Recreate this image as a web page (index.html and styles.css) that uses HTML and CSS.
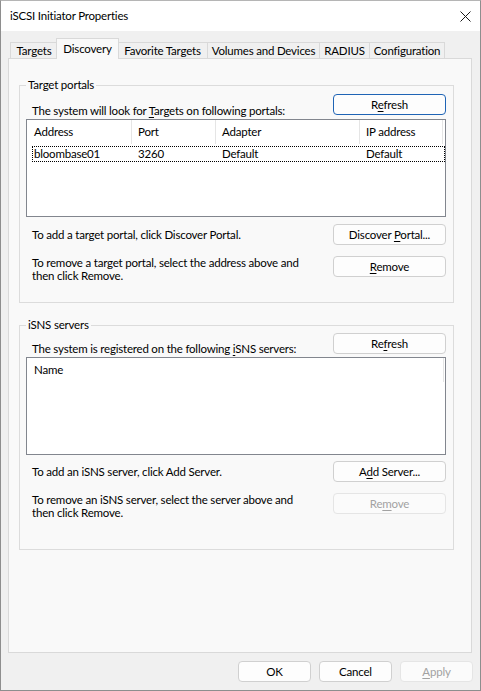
FILE: index.html
```html
<!DOCTYPE html>
<html lang="en">
<head>
<meta charset="utf-8">
<title>iSCSI Initiator Properties</title>
<link rel="stylesheet" href="styles.css">
</head>
<body>
<div class="window">
  <header class="titlebar">
    <span class="title">iSCSI Initiator Properties</span>
    <svg class="close" width="11" height="11" viewBox="0 0 11 11" aria-label="Close">
      <path d="M0.5 0.5 L10.5 10.5 M10.5 0.5 L0.5 10.5" stroke="#1a1a1a" stroke-width="1" fill="none"/>
    </svg>
  </header>

  <div class="client">
    <nav class="tabstrip">
      <span class="tab tab-targets">Targets</span>
      <span class="tab tab-discovery is-active">Discovery</span>
      <span class="tab tab-favorites">Favorite Targets</span>
      <span class="tab tab-volumes">Volumes and Devices</span>
      <span class="tab tab-radius">RADIUS</span>
      <span class="tab tab-config">Configuration</span>
    </nav>

    <section class="panel">
      <fieldset class="group group-portals">
        <legend>Target portals</legend>
        <div class="head-row">
          <span class="label">The system will look for <u>T</u>argets on following portals:</span>
          <button class="btn btn-default">R<u>e</u>fresh</button>
        </div>
        <div class="listview">
          <div class="lv-header lv-portals">
            <span class="lv-col">Address</span>
            <span class="lv-col">Port</span>
            <span class="lv-col">Adapter</span>
            <span class="lv-col">IP address</span>
          </div>
          <div class="lv-row lv-portals-row">
            <span class="lv-cell">bloombase01</span>
            <span class="lv-cell">3260</span>
            <span class="lv-cell">Default</span>
            <span class="lv-cell">Default</span>
          </div>
        </div>
        <div class="action-row">
          <span class="label">To add a target portal, click Discover Portal.</span>
          <button class="btn">Discover <u>P</u>ortal...</button>
        </div>
        <div class="action-row action-row-wrap">
          <span class="label label-wrap">To remove a target portal, select the address above and<br>then click Remove.</span>
          <button class="btn"><u>R</u>emove</button>
        </div>
      </fieldset>

      <fieldset class="group group-isns">
        <legend>iSNS servers</legend>
        <div class="head-row">
          <span class="label">The system is registered on the following <u>i</u>SNS servers:</span>
          <button class="btn">Re<u>f</u>resh</button>
        </div>
        <div class="listview">
          <div class="lv-header lv-servers">
            <span class="lv-col">Name</span>
          </div>
        </div>
        <div class="action-row">
          <span class="label">To add an iSNS server, click Add Server.</span>
          <button class="btn">A<u>d</u>d Server...</button>
        </div>
        <div class="action-row action-row-wrap">
          <span class="label label-wrap">To remove an iSNS server, select the server above and<br>then click Remove.</span>
          <button class="btn" disabled>Re<u>m</u>ove</button>
        </div>
      </fieldset>
    </section>

    <footer class="footer">
      <button class="btn btn-dialog">OK</button>
      <button class="btn btn-dialog">Cancel</button>
      <button class="btn btn-dialog" disabled><u>A</u>pply</button>
    </footer>
  </div>
</div>
</body>
</html>
```

FILE: styles.css
```css
* {
  box-sizing: border-box;
}

html, body {
  margin: 0;
  padding: 0;
  background: #f0f0f0;
}

body {
  font-family: "Lato", "Liberation Sans", sans-serif;
  font-size: 11.5px;
  letter-spacing: -0.2px;
  color: #000;
}

.window {
  width: 481px;
  height: 691px;
  border: 1px solid #8e8e8e;
  border-top-color: #b5b5b5;
  background: #f0f0f0;
  display: flex;
  flex-direction: column;
}

/* title bar */
.titlebar {
  height: 30px;
  flex: none;
  background: #fff;
  display: flex;
  align-items: center;
  justify-content: space-between;
  padding: 0 9px 0 9px;
}

.title {
  line-height: 16px;
}

.close {
  display: block;
}

/* client area */
.client {
  flex: 1;
  display: flex;
  flex-direction: column;
  padding: 0 7px 0 7px;
}

.tabstrip {
  height: 27px;
  display: flex;
  align-items: flex-end;
  padding-left: 2px;
}

.tab {
  height: 16px;
  border: 1px solid #d9d9d9;
  border-bottom: 0;
  background: #f0f0f0;
  display: flex;
  align-items: center;
  justify-content: center;
  line-height: 14px;
  white-space: nowrap;
  flex: none;
}

.tab + .tab {
  margin-left: -1px;
}

.tab.is-active {
  height: 21px;
  margin-bottom: -1px;
  margin-left: -2px;
  margin-right: -1px;
  background: #f9f9f9;
  position: relative;
  z-index: 1;
  padding-bottom: 1px;
}

.tab-targets { width: 48px; }
.tab-discovery { width: 63px; }
.tab-favorites { width: 91px; }
.tab-volumes { width: 113px; }
.tab-radius { width: 51px; }
.tab-config { width: 76px; }

.panel {
  height: 595px;
  flex: none;
  width: 464px;
  border: 1px solid #d9d9d9;
  background: #f9f9f9;
  padding: 18px 0 0 10px;
}

/* group boxes */
.group {
  width: 435px;
  margin: 0;
  border: 1px solid #dcdcdc;
  padding: 1px 7px 20px 6px;
  min-width: 0;
}

.group legend {
  padding: 0 2px;
  line-height: 16px;
  color: #000;
}

.group-isns {
  margin-top: 14px;
  padding-top: 0;
  padding-bottom: 30px;
}

.head-row {
  height: 25px;
  display: flex;
  justify-content: space-between;
  align-items: flex-start;
}

.group-isns .head-row {
  height: 24px;
}

.head-row .label {
  align-self: flex-end;
  line-height: 16px;
}

.label {
  margin-left: 6px;
  line-height: 16px;
  white-space: nowrap;
}

.label-wrap {
  line-height: 13px;
}

u {
  text-decoration: underline;
  text-underline-offset: 2px;
  text-decoration-thickness: 1px;
}

.action-row {
  margin-top: 7px;
  display: flex;
  justify-content: space-between;
  align-items: center;
}

.group-isns .action-row {
  margin-top: 6px;
}

.group .action-row-wrap {
  margin-top: 11px;
  align-items: flex-start;
}

/* push buttons */
.btn {
  font: inherit;
  letter-spacing: inherit;
  color: #000;
  width: 113px;
  height: 21px;
  padding: 0;
  line-height: 16px;
  background: #fdfdfd;
  border: 1px solid #d0d0d0;
  border-radius: 4px;
  flex: none;
}

.btn-default {
  border-color: #1f64b5;
}

.btn:disabled {
  color: #a2a2a2;
  background: #fbfbfb;
  border-color: #e5e5e5;
}

/* list views */
.listview {
  height: 98px;
  border: 1px solid #82868e;
  background: #fff;
}

.lv-header {
  height: 24px;
  display: flex;
  align-items: center;
}

.lv-col {
  height: 24px;
  line-height: 24px;
  padding-left: 6px;
  border-right: 1px solid #e5e5e5;
  flex: none;
  white-space: nowrap;
}

.lv-portals .lv-col:nth-child(1) { width: 105px; padding-left: 7px; }
.lv-portals .lv-col:nth-child(2) { width: 84px; }
.lv-portals .lv-col:nth-child(3) { width: 144px; }
.lv-portals .lv-col:nth-child(4) { width: 83px; }

.lv-servers .lv-col { width: 417px; padding-left: 7px; }

.lv-row {
  height: 16px;
  margin: 2px 0 0 5px;
  border: 1px dotted #000;
  display: flex;
  align-items: center;
}

.lv-cell {
  line-height: 14px;
  flex: none;
  white-space: nowrap;
}

.lv-portals-row .lv-cell:nth-child(1) { width: 99px; padding-left: 1px; }
.lv-portals-row .lv-cell:nth-child(2) { width: 84px; padding-left: 6px; }
.lv-portals-row .lv-cell:nth-child(3) { width: 144px; padding-left: 6px; }
.lv-portals-row .lv-cell:nth-child(4) { flex: 1; padding-left: 6px; }

/* dialog buttons */
.footer {
  display: flex;
  justify-content: flex-end;
  gap: 8px;
  padding-top: 8px;
}

.btn-dialog {
  width: 73px;
}
```
